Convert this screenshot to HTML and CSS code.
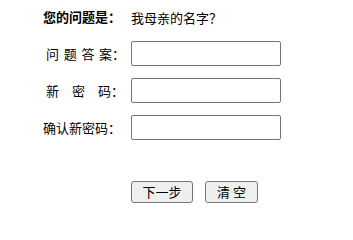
FILE: index.html
```html
<!DOCTYPE html>
<html lang="zh-CN">
<head>
<meta charset="utf-8">
<title>找回密码</title>
<link rel="stylesheet" href="styles.css">
</head>
<body>
<form class="form">
  <div class="grid">
    <div class="label strong">您的问题是：</div>
    <div class="value question">我母亲的名字？</div>

    <label class="label indent" for="ans"><span class="sp4">问题答</span>案：</label>
    <div class="value"><input id="ans" class="field" type="text"></div>

    <label class="label indent" for="pw"><span class="sp13">新密</span>码：</label>
    <div class="value"><input id="pw" class="field" type="password"></div>

    <label class="label" for="pw2">确认新密码：</label>
    <div class="value"><input id="pw2" class="field" type="password"></div>
  </div>
  <div class="actions">
    <button type="button" class="btn btn-next">下一步</button>
    <button type="reset" class="btn btn-clear">清 空</button>
  </div>
</form>
</body>
</html>
```
FILE: styles.css
```css
html, body {
  margin: 0;
  background: #ffffff;
}
body {
  padding: 8px;
  font-family: "Noto Sans CJK SC", "Noto Sans", sans-serif;
  font-size: 13px;
  color: #000;
}
.form {
  padding-left: 35px;
}
.grid {
  display: grid;
  grid-template-columns: 88px 150px;
  grid-template-rows: 25px 25px 25px 25px;
  row-gap: 12px;
  align-items: center;
  margin-top: -4px;
}
.label {
  white-space: nowrap;
  line-height: 25px;
}
.strong {
  font-weight: bold;
}
.indent {
  padding-left: 3px;
}
.sp4 {
  letter-spacing: 4.7px;
}
.sp13 {
  letter-spacing: 13px;
}
.value {
  line-height: 25px;
  display: flex;
  align-items: center;
}
.question {
  padding-top: 2px;
}
.field {
  box-sizing: border-box;
  width: 150px;
  height: 25px;
  margin: 0;
  padding: 1px 2px;
  border: 1px solid #767676;
  border-radius: 2px;
  background: #fff;
  font: inherit;
}
.actions {
  display: flex;
  gap: 12px;
  margin-top: 41px;
  padding-left: 88px;
}
.btn {
  box-sizing: border-box;
  height: 22px;
  margin: 0;
  padding: 0;
  border: 1px solid #767676;
  border-radius: 3px;
  background: #efefef;
  color: #000;
  font-family: "Noto Sans CJK SC", "Noto Sans", sans-serif;
  font-size: 13px;
  line-height: 20px;
}
.btn-next { width: 62px; }
.btn-clear { width: 53px; }
```
